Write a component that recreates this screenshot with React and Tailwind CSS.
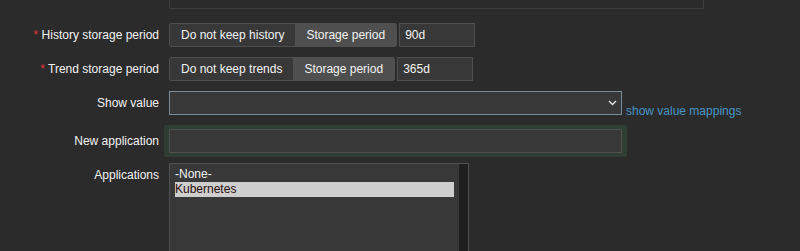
// Item form fragment — storage periods, value map, applications

const FIELD = "h-[24px] border border-[#4f4f4f] bg-[#383838] px-[5px] text-[12px] text-[#f2f2f2] outline-none";

function Label({ children, required, top }) {
  return (
    <div className={`w-[159px] shrink-0 text-right leading-[14px] ${top ? "self-start pt-[5px]" : ""}`}>
      {required && <span className="text-[#e33734]">* </span>}
      {children}
    </div>
  );
}

function Segmented({ off, on }) {
  return (
    <div className="flex h-[24px] overflow-hidden rounded-[2px] border border-[#4f4f4f]">
      <div className="flex items-center bg-[#383838] px-[11px]">{off}</div>
      <div className="flex items-center bg-[#4f4f4f] px-[11px]">{on}</div>
    </div>
  );
}

function PeriodRow({ label, off, value }) {
  return (
    <div className="flex h-[24px] items-center">
      <Label required>{label}</Label>
      <div className="ml-[10px] flex items-center">
        <Segmented off={off} on="Storage period" />
        <input readOnly value={value} className={`${FIELD} ml-[2px] w-[76px]`} />
      </div>
    </div>
  );
}

export default function App() {
  return (
    <div className="h-[251px] w-[800px] overflow-hidden bg-[#2b2b2b] font-['Liberation_Sans',Arial,sans-serif] text-[12px] text-[#f2f2f2]">
      {/* tail of the previous field */}
      <div className="ml-[169px] h-[9px] w-[535px] border-x border-b border-[#3d3d3d]" />

      <div className="mt-[14px] flex flex-col gap-[10px]">
        <PeriodRow label="History storage period" off="Do not keep history" value="90d" />
        <PeriodRow label="Trend storage period" off="Do not keep trends" value="365d" />

        {/* Show value */}
        <div className="flex h-[24px] items-center">
          <Label>Show value</Label>
          <div className="ml-[10px] flex h-[24px] w-[453px] items-center justify-end border border-[#768d99] bg-[#383838] pr-[4px]">
            <svg width="9" height="6" viewBox="0 0 9 6" fill="none">
              <path d="M1 1l3.5 3.5L8 1" stroke="#e6e6e6" strokeWidth="1.3" />
            </svg>
          </div>
          <a className="mb-[-3px] ml-[4px] self-end leading-[14px] text-[#4796c4]">show value mappings</a>
        </div>

        {/* New application (highlighted) */}
        <div className="mb-[-4px] flex h-[32px] items-center">
          <Label>New application</Label>
          <div className="ml-[5px] rounded-[2px] bg-[#2f3e34] px-[5px] py-[4px]">
            <input readOnly value="" className={`${FIELD} block w-[453px]`} />
          </div>
        </div>

        {/* Applications */}
        <div className="flex items-start">
          <Label top>Applications</Label>
          <div className="ml-[10px] flex h-[120px] w-[300px] border border-[#4f4f4f] bg-[#383838]">
            <div className="flex-1 px-[5px] pt-[3px] leading-[15px]">
              <div>-None-</div>
              <div className="bg-[#cecece] text-[#2a0d0d]">Kubernetes</div>
            </div>
            <div className="w-[9px] bg-[#1f1f1f]" />
          </div>
        </div>
      </div>
    </div>
  );
}
